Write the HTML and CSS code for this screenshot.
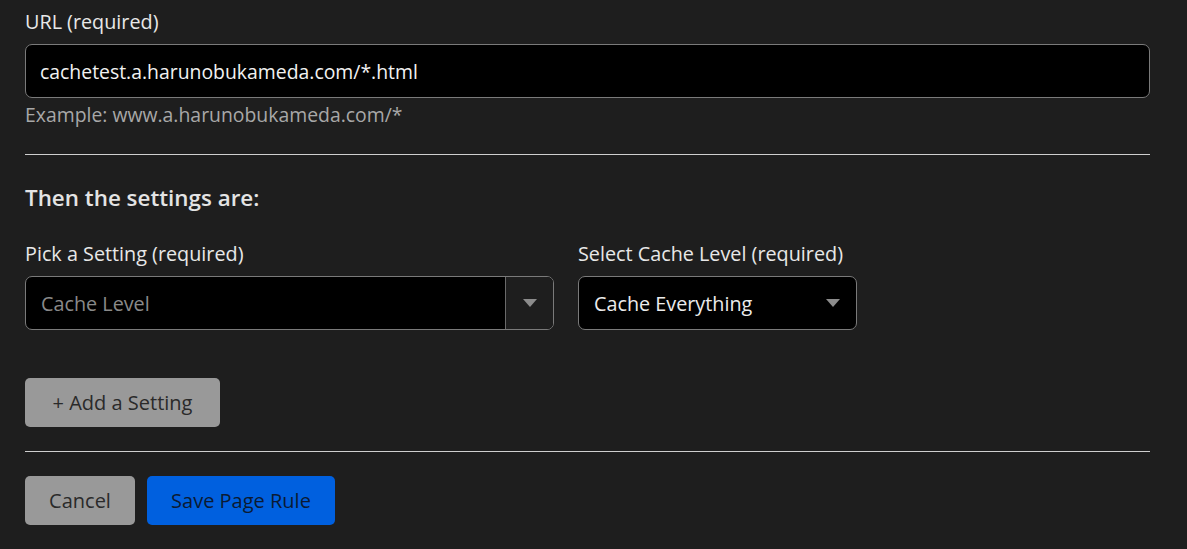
FILE: index.html
```html
<!DOCTYPE html>
<html lang="en">
<head>
<meta charset="utf-8">
<title>Page Rule</title>
<link rel="stylesheet" href="styles.css">
</head>
<body>
<div class="form">
  <label class="label">URL (required)</label>
  <div class="input">cachetest.a.harunobukameda.com/*.html</div>
  <div class="hint">Example: www.a.harunobukameda.com/*</div>
  <hr class="rule rule-top">
  <h2 class="heading">Then the settings are:</h2>
  <div class="settings">
    <div class="field">
      <label class="label">Pick a Setting (required)</label>
      <div class="combo">
        <span class="combo-value">Cache Level</span>
        <span class="combo-toggle"><span class="caret"></span></span>
      </div>
    </div>
    <div class="field">
      <label class="label">Select Cache Level (required)</label>
      <div class="select">
        <span class="select-value">Cache Everything</span>
        <span class="caret"></span>
      </div>
    </div>
  </div>
  <button class="btn btn-gray btn-add">+ Add a Setting</button>
  <hr class="rule rule-bottom">
  <div class="actions">
    <button class="btn btn-gray">Cancel</button>
    <button class="btn btn-blue">Save Page Rule</button>
  </div>
</div>
</body>
</html>
```
FILE: styles.css
```css
* { box-sizing: border-box; }
html, body { margin: 0; padding: 0; background: #1e1e1e; }
body {
  font-family: "Open Sans", "Noto Sans", sans-serif;
  color: #e6e6e6;
  height: 549px;
  overflow: hidden;
}
.form {
  padding: 10px 37px 0 25px;
}
.label {
  display: block;
  font-size: 19.8px;
  line-height: 24px;
  color: #e8e8e8;
  margin-bottom: 10px;
}
.input {
  height: 54px;
  background: #000;
  border: 1px solid #7a7a7a;
  border-radius: 7px;
  padding: 0 14px;
  display: flex;
  align-items: center;
  font-size: 19.4px;
  color: #f2f2f2;
}
.hint {
  margin-top: 5px;
  font-size: 19.4px;
  line-height: 24px;
  color: #a8a8a8;
}
.rule {
  border: 0;
  height: 1px;
  background: #cfcfcf;
  margin: 0;
}
.rule-top { margin-top: 27px; }
.heading {
  margin: 29px 0 0;
  font-size: 22.4px;
  line-height: 28px;
  font-weight: 600;
  color: #e4e4e4;
}
.settings {
  margin-top: 30px;
  display: grid;
  grid-template-columns: 529px 279px;
  column-gap: 24px;
}
.combo, .select {
  height: 54px;
  border: 1px solid #7a7a7a;
  border-radius: 7px;
  display: flex;
  align-items: center;
  font-size: 19.8px;
  overflow: hidden;
}
.combo { background: #000; }
.combo-value {
  flex: 1;
  padding-left: 15px;
  color: #8a8a8a;
}
.combo-toggle {
  align-self: stretch;
  width: 48px;
  border-left: 1px solid #6a6a6a;
  background: #1e1e1e;
  display: flex;
  align-items: center;
  justify-content: center;
}
.select {
  background: #000;
  padding: 0 16px 0 15px;
  justify-content: space-between;
  color: #ececec;
}
.caret {
  width: 0;
  height: 0;
  border-left: 7px solid transparent;
  border-right: 7px solid transparent;
  border-top: 8px solid #8c8c8c;
}
.btn {
  font-family: inherit;
  font-size: 20px;
  height: 49px;
  border: 0;
  border-radius: 5px;
  padding: 0 24px;
  cursor: pointer;
}
.btn-gray { background: #999; color: #2a2a2a; }
.btn-blue { background: #0060df; color: #0b1a33; }
.btn-add { margin-top: 48px; width: 195px; padding: 0; }
.rule-bottom { margin-top: 24px; }
.actions {
  margin-top: 24px;
  display: flex;
  gap: 12px;
}
.actions .btn-gray { width: 110px; padding: 0; }
.actions .btn-blue { width: 188px; padding: 0; }
```
